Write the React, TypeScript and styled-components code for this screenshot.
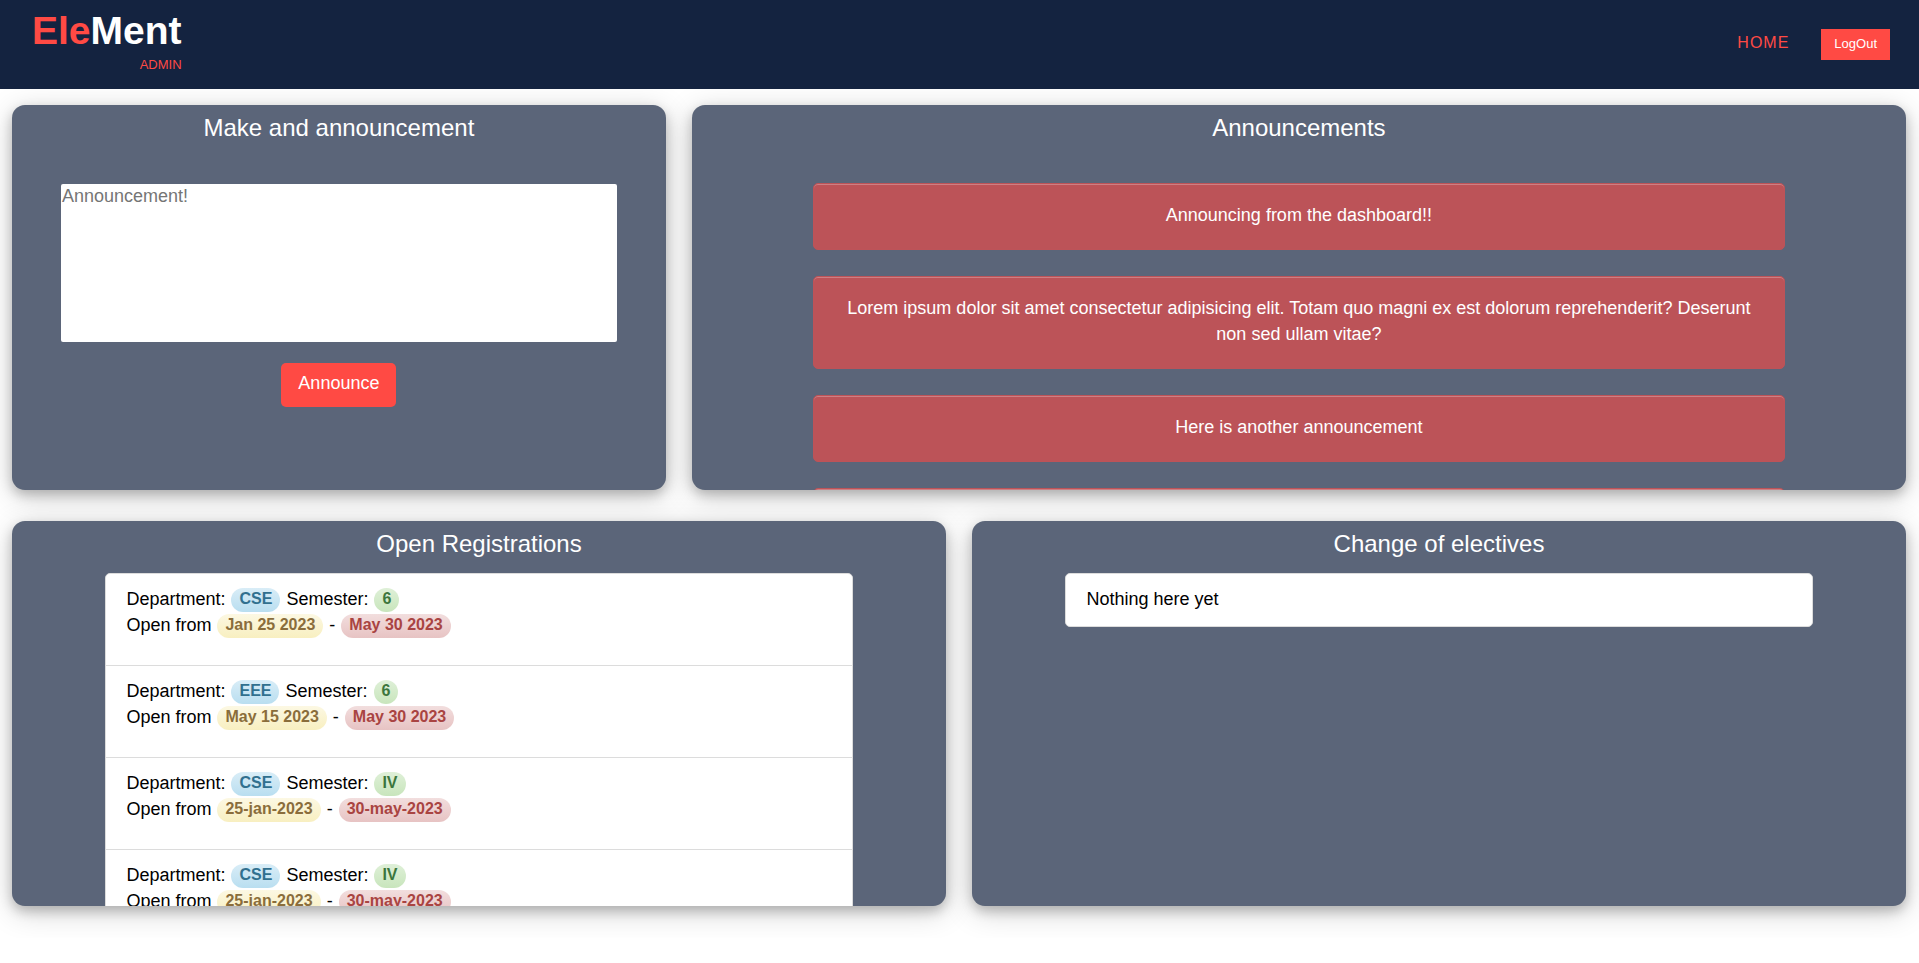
import React from 'react';
import styled, { createGlobalStyle } from 'styled-components';

const NAVY = '#142340';
const RED = '#ff4a44';
const SLATE = '#5b6579';

const GlobalStyle = createGlobalStyle`
  *, *::before, *::after { box-sizing: border-box; }
  body {
    margin: 0;
    background: #fff;
    color: #000;
    font-family: "Liberation Sans", Arial, Helvetica, sans-serif;
    font-size: 18px;
    line-height: 26px;
  }
`;

const Header = styled.header`
  position: relative;
  z-index: 1;
  display: flex;
  align-items: center;
  justify-content: space-between;
  height: 89px;
  padding: 0 29px 0 32px;
  background: ${NAVY};
`;

const Brand = styled.a`
  display: flex;
  flex-direction: column;
  align-items: flex-end;
  padding-bottom: 4px;
  color: #fff;
  text-decoration: none;
`;

const BrandName = styled.span`
  font-size: 39px;
  font-weight: 700;
  line-height: 44px;

  em {
    color: ${RED};
    font-style: normal;
  }
`;

const BrandRole = styled.span`
  color: ${RED};
  font-size: 13px;
  line-height: 24px;
`;

const Nav = styled.nav`
  display: flex;
  align-items: center;
  gap: 32px;
`;

const NavLink = styled.a`
  padding-bottom: 4px;
  color: ${RED};
  font-size: 16px;
  letter-spacing: 1px;
  text-decoration: none;
`;

const LogoutButton = styled.button`
  height: 31px;
  padding: 0 13px 2px;
  border: 0;
  background: ${RED};
  color: #fff;
  font: inherit;
  font-size: 13px;
  line-height: 16px;
`;

const Board = styled.main`
  display: flex;
  flex-direction: column;
  gap: 31px;
  padding: 16px 13px 32px 12px;
`;

const BoardRow = styled.div<{ $columns: string }>`
  display: grid;
  grid-template-columns: ${({ $columns }) => $columns};
  gap: 26px;
`;

const Card = styled.section`
  height: 40vh;
  min-width: 0;
  overflow: hidden;
  border-radius: 13px;
  background: ${SLATE};
  box-shadow: 0 5px 12px rgba(0, 0, 0, 0.22), 0 6px 30px rgba(0, 0, 0, 0.19);
`;

const CardTitle = styled.h2`
  margin: 0;
  padding: 8px 0;
  color: #fff;
  font-size: 24px;
  font-weight: 400;
  line-height: 30px;
  text-align: center;
`;

const AnnounceForm = styled.form`
  display: flex;
  flex-direction: column;
  align-items: center;
  gap: 21px;
  padding-top: 33px;
`;

const AnnounceText = styled.textarea`
  width: 85%;
  height: 158px;
  padding: 0 1px;
  border: 0;
  border-radius: 2px;
  background: #fff;
  color: #000;
  font: inherit;
  line-height: 24px;
  resize: none;

  &::placeholder { color: #757575; }
`;

const AnnounceButton = styled.button`
  height: 44px;
  padding: 0 17px 4px;
  border: 0;
  border-radius: 5px;
  background: ${RED};
  color: #fff;
  font: inherit;
`;

const Announcements = styled.ul`
  display: flex;
  flex-direction: column;
  gap: 26px;
  width: 80%;
  margin: 0 auto;
  padding: 32px 0 0;
  list-style: none;
`;

const Announcement = styled.li`
  min-height: 67px;
  padding: 18px 24px 21px;
  border: 1px solid #bd5358;
  border-radius: 5px;
  background: #bc5358;
  box-shadow: inset 0 1px 0 rgba(255, 255, 255, 0.26);
  color: #fff;
  text-align: center;
`;

const List = styled.ul`
  width: 80%;
  margin: 6px auto 0;
  padding: 0;
  border: 1px solid #dcdcdc;
  border-radius: 5px;
  background: #fff;
  list-style: none;
`;

const ListItem = styled.li`
  padding: 12px 20px 14px;

  & + & { border-top: 1px solid #dcdcdc; }

  p { margin: 0; }
  p + p { margin-bottom: 13px; }
`;

const tones = {
  info: { color: '#31708f', from: '#d9edf7', to: '#b9def0' },
  success: { color: '#3c763d', from: '#dff0d8', to: '#c8e5bc' },
  warning: { color: '#8a6d3b', from: '#fcf8e3', to: '#f8efc0' },
  danger: { color: '#a94442', from: '#f2dede', to: '#e7c3c3' },
};

const Pill = styled.span<{ $tone: keyof typeof tones }>`
  display: inline-block;
  height: 24px;
  margin: 2px 1px 0;
  padding: 0 8px;
  border-radius: 12px;
  background: linear-gradient(${({ $tone }) => `${tones[$tone].from}, ${tones[$tone].to}`});
  color: ${({ $tone }) => tones[$tone].color};
  font-size: 16px;
  font-weight: 700;
  line-height: 22px;
  vertical-align: top;
`;

const announcements = [
  'Announcing from the dashboard!!',
  'Lorem ipsum dolor sit amet consectetur adipisicing elit. Totam quo magni ex est dolorum reprehenderit? Deserunt non sed ullam vitae?',
  'Here is another announcement',
  '',
];

const registrations = [
  { department: 'CSE', semester: '6', from: 'Jan 25 2023', to: 'May 30 2023' },
  { department: 'EEE', semester: '6', from: 'May 15 2023', to: 'May 30 2023' },
  { department: 'CSE', semester: 'IV', from: '25-jan-2023', to: '30-may-2023' },
  { department: 'CSE', semester: 'IV', from: '25-jan-2023', to: '30-may-2023' },
];

export default function App() {
  return (
    <>
      <GlobalStyle />
      <Header>
        <Brand href="#">
          <BrandName><em>Ele</em>Ment</BrandName>
          <BrandRole>ADMIN</BrandRole>
        </Brand>
        <Nav>
          <NavLink href="#">HOME</NavLink>
          <LogoutButton type="button">LogOut</LogoutButton>
        </Nav>
      </Header>
      <Board>
        <BoardRow $columns="35fr 65fr">
          <Card>
            <CardTitle id="announce-title">Make and announcement</CardTitle>
            <AnnounceForm onSubmit={(event) => event.preventDefault()}>
              <AnnounceText aria-labelledby="announce-title" placeholder="Announcement!" />
              <AnnounceButton type="submit">Announce</AnnounceButton>
            </AnnounceForm>
          </Card>
          <Card>
            <CardTitle>Announcements</CardTitle>
            <Announcements>
              {announcements.map((text, index) => (
                <Announcement key={index}>{text}</Announcement>
              ))}
            </Announcements>
          </Card>
        </BoardRow>
        <BoardRow $columns="1fr 1fr">
          <Card>
            <CardTitle>Open Registrations</CardTitle>
            <List>
              {registrations.map((entry, index) => (
                <ListItem key={index}>
                  <p>
                    Department: <Pill $tone="info">{entry.department}</Pill>{' '}
                    Semester: <Pill $tone="success">{entry.semester}</Pill>
                  </p>
                  <p>
                    Open from <Pill $tone="warning">{entry.from}</Pill>{' - '}
                    <Pill $tone="danger">{entry.to}</Pill>
                  </p>
                </ListItem>
              ))}
            </List>
          </Card>
          <Card>
            <CardTitle>Change of electives</CardTitle>
            <List>
              <ListItem>Nothing here yet</ListItem>
            </List>
          </Card>
        </BoardRow>
      </Board>
    </>
  );
}
